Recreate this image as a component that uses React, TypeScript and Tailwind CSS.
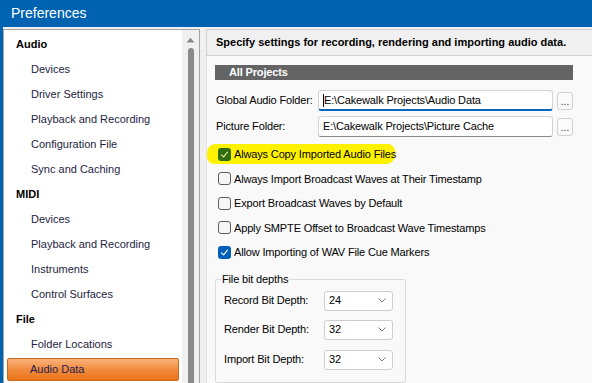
import React from 'react';

type TreeItem = { label: string; level: 0 | 1; selected?: boolean };

const tree: TreeItem[] = [
  { label: 'Audio', level: 0 },
  { label: 'Devices', level: 1 },
  { label: 'Driver Settings', level: 1 },
  { label: 'Playback and Recording', level: 1 },
  { label: 'Configuration File', level: 1 },
  { label: 'Sync and Caching', level: 1 },
  { label: 'MIDI', level: 0 },
  { label: 'Devices', level: 1 },
  { label: 'Playback and Recording', level: 1 },
  { label: 'Instruments', level: 1 },
  { label: 'Control Surfaces', level: 1 },
  { label: 'File', level: 0 },
  { label: 'Folder Locations', level: 1 },
  { label: 'Audio Data', level: 1, selected: true },
];

const checks = [
  { label: 'Always Import Broadcast Waves at Their Timestamp', checked: false },
  { label: 'Export Broadcast Waves by Default', checked: false },
  { label: 'Apply SMPTE Offset to Broadcast Wave Timestamps', checked: false },
  { label: 'Allow Importing of WAV File Cue Markers', checked: true },
];

const depths = [
  { label: 'Record Bit Depth:', value: '24' },
  { label: 'Render Bit Depth:', value: '32' },
  { label: 'Import Bit Depth:', value: '32' },
];

const Tick = ({ color }: { color: string }) => (
  <svg width="9" height="9" viewBox="0 0 9 9" fill="none">
    <path d="M1.5 4.8 L3.6 6.8 L7.5 2.2" stroke={color} strokeWidth="1.1" strokeLinecap="round" strokeLinejoin="round" />
  </svg>
);

const CheckBox = ({ checked }: { checked: boolean }) =>
  checked ? (
    <div className="w-[13px] h-[13px] rounded-[3px] bg-[#005fb8] flex items-center justify-center shrink-0">
      <Tick color="#ffffff" />
    </div>
  ) : (
    <div className="w-[13px] h-[13px] rounded-[3px] border border-[#5c5c5c] bg-[#f6f6f6] shrink-0" />
  );

const PathField = ({ value, focused }: { value: string; focused?: boolean }) => (
  <div className="flex items-center gap-[4px]">
    <div
      className={`w-[235px] h-[21px] bg-white border border-[#d4d4d4] rounded-[3px] pl-[4px] flex items-center whitespace-nowrap ${
        focused ? 'border-b-2 border-b-[#0067c0]' : 'border-b-[#8a8a8a]'
      }`}
    >
      {focused && <span className="w-px h-[13px] bg-black" />}
      <span className="text-black">{value}</span>
    </div>
    <div className="w-[16px] h-[18px] bg-[#fbfbfb] border border-[#d0d0d0] rounded-[3px] flex items-end justify-center pb-[2px] text-[10px] leading-none text-[#333] tracking-normal">
      ...
    </div>
  </div>
);

export default function App() {
  return (
    <div className="w-[592px] h-[383px] overflow-hidden bg-[#f0f0f0] border-l-[3px] border-[#0063b1] flex flex-col font-['Liberation_Sans',sans-serif] text-[11px] text-black">
      {/* title bar */}
      <div className="h-[27px] bg-[#0063b1] text-white text-[14px] pl-[8px] flex items-center shrink-0">
        Preferences
      </div>

      <div className="flex flex-1 pt-[2px] min-h-0">
        {/* tree */}
        <div className="w-[197px] border-t border-l border-r border-[#a3a3a3] flex shrink-0">
          <div className="flex-1 bg-white pt-[2px]">
            {tree.map((t, i) =>
              t.selected ? (
                <div key={i} className="h-[25px] py-[1px] px-[3px]">
                  <div className="h-full rounded-[2px] border border-[#c8691d] bg-gradient-to-b from-[#f9b27a] via-[#f18b3c] to-[#ea7416] pl-[22px] flex items-center text-[#1d1d55]">
                    {t.label}
                  </div>
                </div>
              ) : (
                <div
                  key={i}
                  className={`h-[25px] flex items-center ${
                    t.level === 0 ? 'pl-[12px] font-bold text-black' : 'pl-[27px] text-[#1d1d3f]'
                  }`}
                >
                  {t.label}
                </div>
              )
            )}
          </div>
          <div className="w-[17px] bg-[#f0f0f0] flex flex-col items-center pt-[7px]">
            <svg width="9" height="6" viewBox="0 0 9 6">
              <path d="M0.5 5.5 L4.5 0.8 L8.5 5.5 Z" fill="#8a8a8a" />
            </svg>
            <div className="w-[6px] flex-1 mt-[5px] rounded-t-[3px] bg-[#8a8a8a]" />
          </div>
        </div>

        {/* right pane */}
        <div className="flex-1 ml-[6px] flex flex-col min-w-0 tracking-[-0.15px]">
          <div className="h-[27px] border border-[#cfcfcf] border-r-0 bg-[#f0f0f0] pl-[9px] flex items-center font-bold whitespace-nowrap tracking-normal shrink-0">
            Specify settings for recording, rendering and importing audio data.
          </div>
          <div className="flex-1 bg-[#f9f9f9] border-l border-[#e2e2e2] pl-[8px] pr-[19px] pt-[9px]">
            <div className="h-[15px] bg-[#646464] text-white font-bold pl-[14px] flex items-center">All Projects</div>

            <div className="mt-[10px] flex items-center">
              <span className="w-[103px] pl-[1px] whitespace-nowrap">Global Audio Folder:</span>
              <PathField value="E:\Cakewalk Projects\Audio Data" focused />
            </div>
            <div className="mt-[5px] flex items-center">
              <span className="w-[103px] pl-[1px] whitespace-nowrap">Picture Folder:</span>
              <PathField value="E:\Cakewalk Projects\Picture Cache" />
            </div>

            <div className="mt-[5px]">
              <div className="relative h-[24.5px] flex items-center gap-[3px] pl-[3px]">
                <div className="absolute left-[-8px] top-[2px] w-[188px] h-[20px] bg-[#fff200] rounded-[8px] -skew-x-3" />
                <div className="relative w-[13px] h-[13px] rounded-[3px] bg-[#2f6c12] flex items-center justify-center">
                  <Tick color="#e8f3a0" />
                </div>
                <span className="relative text-black whitespace-nowrap">Always Copy Imported Audio Files</span>
              </div>
              {checks.map((c, i) => (
                <div key={i} className="h-[24.5px] flex items-center gap-[3px] pl-[3px] whitespace-nowrap">
                  <CheckBox checked={c.checked} />
                  <span>{c.label}</span>
                </div>
              ))}
            </div>

            <fieldset className="mt-[8px] w-[191px] border border-[#dadada] rounded-[2px] pl-[8px] pb-[12px]">
              <legend className="-ml-[3px] px-[1px] leading-[13px]">File bit depths</legend>
              <div className="flex flex-col gap-[9px] pt-[5px]">
                {depths.map((d, i) => (
                  <div key={i} className={`flex items-center ${i === 2 ? 'mt-[1px]' : ''}`}>
                    <span className="w-[100px] whitespace-nowrap">{d.label}</span>
                    <div className="w-[69px] h-[20px] bg-white border border-[#cdcdcd] rounded-[3px] pl-[4px] pr-[6px] flex items-center justify-between">
                      <span>{d.value}</span>
                      <svg width="8" height="5" viewBox="0 0 8 5">
                        <path d="M0.5 0.5 L4 4 L7.5 0.5" stroke="#7a7a7a" strokeWidth="1" fill="none" />
                      </svg>
                    </div>
                  </div>
                ))}
              </div>
            </fieldset>
          </div>
        </div>
      </div>
    </div>
  );
}
